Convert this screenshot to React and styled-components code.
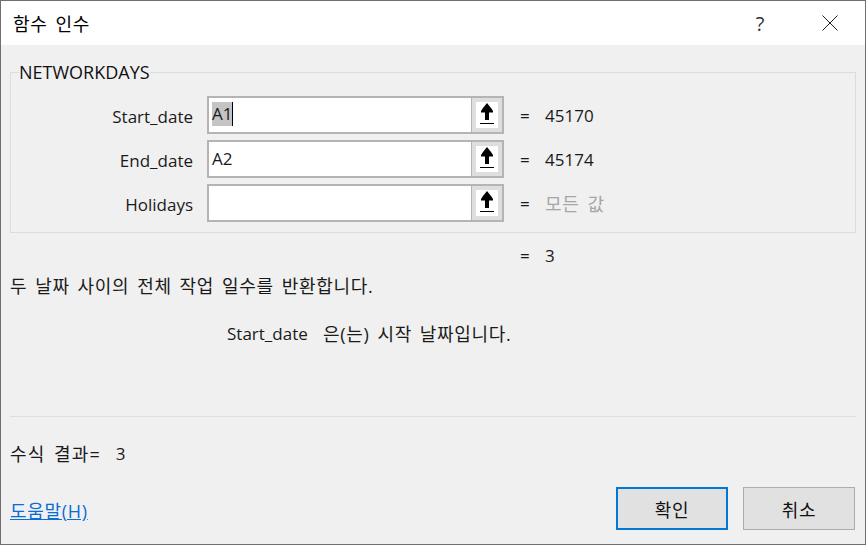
import React from "react";
import styled, { createGlobalStyle } from "styled-components";

const GlobalStyle = createGlobalStyle`
  html, body {
    margin: 0;
    padding: 0;
    background: #f0f0f0;
  }
  body {
    font-family: "Open Sans", "Noto Sans CJK KR", sans-serif;
    font-size: 17px;
    color: #1a1a1a;
  }
`;

const Dialog = styled.div`
  box-sizing: border-box;
  width: 866px;
  height: 545px;
  border: 1px solid #6f6f6f;
  display: flex;
  flex-direction: column;
  background: #f0f0f0;
  overflow: hidden;
`;

const Hangul = styled.span`
  font-size: 18px;
  letter-spacing: 0.7px;
  word-spacing: 2.5px;
`;

const TitleBar = styled.div`
  height: 44px;
  flex: none;
  background: #fff;
  display: flex;
  align-items: center;
  padding-left: 12px;
`;

const Title = styled(Hangul)`
  flex: 1;
  color: #000;
`;

const TitleButton = styled.div`
  width: 70px;
  height: 44px;
  display: flex;
  align-items: center;
  justify-content: center;
  font-size: 20px;
  color: #333;
`;

const Content = styled.div`
  flex: 1;
  display: flex;
  flex-direction: column;
  padding: 15px 9px 0;
`;

const ArgsGroup = styled.fieldset`
  box-sizing: border-box;
  height: 173px;
  margin: 0;
  padding: 12px 0 0;
  border: 1px solid #dcdcdc;
  flex: none;
`;

const GroupLegend = styled.legend`
  margin-left: 8px;
  padding: 1px 0;
  line-height: 22px;
  font-size: 18px;
  color: #111;
`;

const ArgRow = styled.div`
  display: flex;
  align-items: center;
  height: 38px;
  margin-bottom: 6px;
`;

const ArgLabel = styled.div`
  width: 182px;
  padding-top: 2px;
  text-align: right;
  margin-right: 14px;
`;

const RefInput = styled.div`
  box-sizing: border-box;
  width: 297px;
  height: 38px;
  display: flex;
  border: 2px solid #b4b4b4;
  background: #fff;
`;

const InputText = styled.div`
  flex: 1;
  padding: 0 0 2px 3px;
  display: flex;
  align-items: center;
`;

const Selected = styled.span`
  background: #c4c4c4;
  line-height: 24px;
`;

const Caret = styled.span`
  display: inline-block;
  width: 1px;
  height: 24px;
  background: #000;
`;

const RefButton = styled.div`
  box-sizing: border-box;
  width: 31px;
  border-left: 1px solid #b4b4b4;
  background: #fff;
  box-shadow: inset 0 0 0 4px #dedede;
  display: flex;
  align-items: center;
  justify-content: center;
`;

const ArgValue = styled.div`
  display: flex;
  align-items: center;
  margin-left: 16px;
  color: ${props => (props.muted ? "#a6a6a6" : "#1a1a1a")};
`;

const Equals = styled.span`
  width: 25px;
  color: #1a1a1a;
`;

const ResultRow = styled.div`
  display: flex;
  margin: 11px 0 0 510px;
  line-height: 24px;
`;

const Description = styled(Hangul)`
  display: block;
  margin: 6px 0 0;
  line-height: 24px;
`;

const ArgHelp = styled.div`
  display: flex;
  margin: 24px 0 0 217px;
  line-height: 24px;
`;

const ArgHelpName = styled.span`
  width: 96px;
`;

const Divider = styled.div`
  height: 1px;
  margin: 70px 0 0;
  background: #dedede;
`;

const FormulaResult = styled.div`
  display: flex;
  margin: 25px 0 0;
  line-height: 24px;
`;

const FormulaLabel = styled(Hangul)`
  letter-spacing: 1.1px;
  word-spacing: 3px;
`;

const FormulaValue = styled.span`
  margin-left: 15px;
`;

const Footer = styled.div`
  display: flex;
  align-items: center;
  margin-top: 21px;
  padding-right: 1px;
`;

const HelpLink = styled.a`
  flex: 1;
  padding-top: 2px;
  color: #0a6cd6;
  text-decoration: underline;
`;

const Button = styled.div`
  box-sizing: border-box;
  width: 112px;
  height: 43px;
  margin-left: 15px;
  display: flex;
  align-items: center;
  justify-content: center;
  background: #e1e1e1;
  border: ${props => (props.primary ? "2px solid #0078d7" : "1px solid #adadad")};
  color: #111;
`;

const ArrowIcon = () => (
  <svg width="14" height="24" viewBox="0 0 14 24">
    <path d="M7 0 L9 2.500 L11 5 L13 8 L13 9.500 L9 9.500 L9 17 L5 17 L5 9.500 L1 9.500 L1 8 L3 5 L5 2.500 Z" fill="#000" />
    <rect x="0" y="20" width="14" height="1" fill="#000" />
  </svg>
);

const CloseIcon = () => (
  <svg width="16" height="16" viewBox="0 0 16 16">
    <path d="M0.500 0.500 L15.500 15.500 M15.500 0.500 L0.500 15.500" stroke="#222" strokeWidth="1" fill="none" />
  </svg>
);

const args = [
  { name: "Start_date", text: "A1", active: true, value: "45170" },
  { name: "End_date", text: "A2", value: "45174" },
  { name: "Holidays", text: "", value: "모든 값", muted: true }
];

const App = () => (
  <>
    <GlobalStyle />
    <Dialog>
      <TitleBar>
        <Title>함수 인수</Title>
        <TitleButton>?</TitleButton>
        <TitleButton>
          <CloseIcon />
        </TitleButton>
      </TitleBar>
      <Content>
        <ArgsGroup>
          <GroupLegend>NETWORKDAYS</GroupLegend>
          {args.map(arg => (
            <ArgRow key={arg.name}>
              <ArgLabel>{arg.name}</ArgLabel>
              <RefInput>
                <InputText>
                  {arg.active ? (
                    <>
                      <Selected>{arg.text}</Selected>
                      <Caret />
                    </>
                  ) : (
                    arg.text
                  )}
                </InputText>
                <RefButton>
                  <ArrowIcon />
                </RefButton>
              </RefInput>
              <ArgValue muted={arg.muted}>
                <Equals>=</Equals>
                {arg.muted ? <Hangul>{arg.value}</Hangul> : arg.value}
              </ArgValue>
            </ArgRow>
          ))}
        </ArgsGroup>
        <ResultRow>
          <Equals>=</Equals>3
        </ResultRow>
        <Description>두 날짜 사이의 전체 작업 일수를 반환합니다.</Description>
        <ArgHelp>
          <ArgHelpName>Start_date</ArgHelpName>
          <Hangul>은(는) 시작 날짜입니다.</Hangul>
        </ArgHelp>
        <Divider />
        <FormulaResult>
          <FormulaLabel>수식 결과=</FormulaLabel>
          <FormulaValue>3</FormulaValue>
        </FormulaResult>
        <Footer>
          <HelpLink>
            <Hangul>도움말(H)</Hangul>
          </HelpLink>
          <Button primary>
            <Hangul>확인</Hangul>
          </Button>
          <Button>
            <Hangul>취소</Hangul>
          </Button>
        </Footer>
      </Content>
    </Dialog>
  </>
);

export default App;
